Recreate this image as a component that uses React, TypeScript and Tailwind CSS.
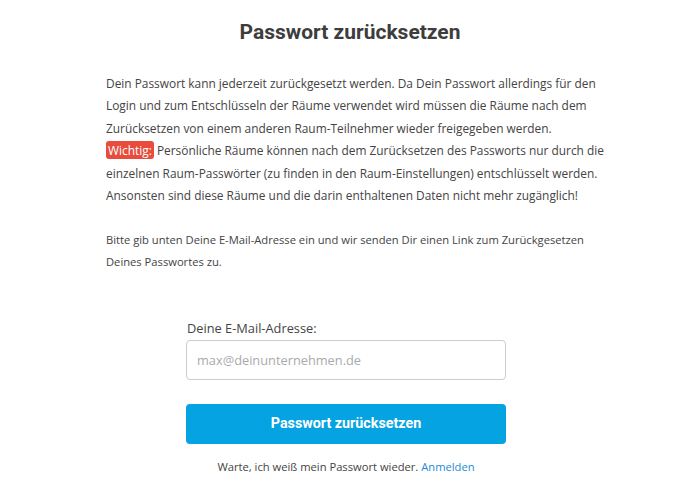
import React from "react";

export default function App() {
  return (
    <div className="w-[700px] h-[500px] bg-white flex flex-col items-center overflow-hidden">
      <h1 className="mt-[18px] text-[21px] leading-[28px] font-bold text-[#3d3d3d] font-['Roboto',sans-serif]">
        Passwort zurücksetzen
      </h1>
      <div className="self-start ml-[106px] mt-[26px] w-[508px] font-['Open_Sans',sans-serif] text-[11.9px] leading-[22.4px] text-[#444]">
        <p>
          Dein Passwort kann jederzeit zurückgesetzt werden. Da Dein Passwort allerdings für den Login und zum Entschlüsseln der Räume verwendet wird müssen die Räume nach dem Zurücksetzen von einem anderen Raum-Teilnehmer wieder freigegeben werden.
          <br />
          <span className="inline-block bg-[#e74c3c] text-white rounded-[3px] px-[2px] leading-[18px]">Wichtig:</span> Persönliche Räume können nach dem Zurücksetzen des Passworts nur durch die einzelnen Raum-Passwörter (zu finden in den Raum-Einstellungen) entschlüsselt werden. Ansonsten sind diese Räume und die darin enthaltenen Daten nicht mehr zugänglich!
        </p>
        <p className="mt-[22.4px] text-[11.2px]">
          Bitte gib unten Deine E-Mail-Adresse ein und wir senden Dir einen Link zum Zurückgesetzen Deines Passwortes zu.
        </p>
      </div>
      <div className="self-start ml-[186px] mt-[45px] w-[320px] flex flex-col font-['Open_Sans',sans-serif]">
        <label className="text-[12.8px] leading-[18px] text-[#444] pl-[1px]">Deine E-Mail-Adresse:</label>
        <input
          className="mt-[3px] h-[40px] w-full border border-[#ccc] rounded-[4px] px-[10px] text-[12.8px] text-[#444] placeholder:text-[#aaa] outline-none"
          placeholder="max@deinunternehmen.de"
        />
        <button className="mt-[24px] h-[40px] w-full bg-[#06a3e3] rounded-[4px] text-white text-[14.3px] font-bold font-['Roboto',sans-serif]">
          Passwort zurücksetzen
        </button>
        <p className="mt-[14px] text-center text-[11.2px] leading-[18px] text-[#444]">
          Warte, ich weiß mein Passwort wieder. <a className="text-[#1f8ad6]">Anmelden</a>
        </p>
      </div>
    </div>
  );
}
